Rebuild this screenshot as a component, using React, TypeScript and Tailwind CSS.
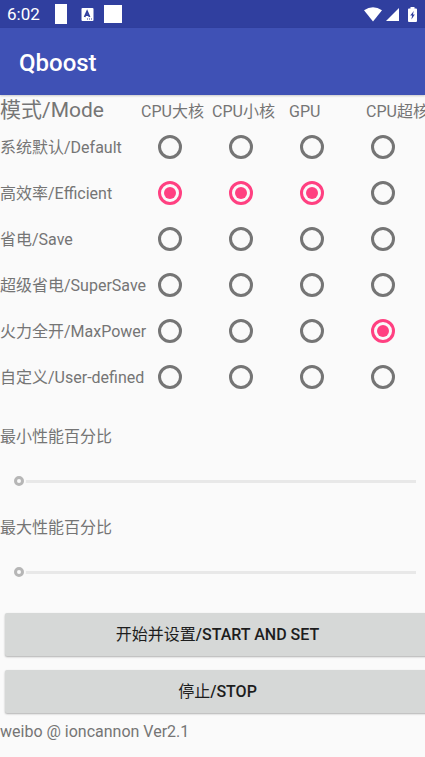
import { useState } from 'react';

const columns = [
  { id: 'big', label: 'CPU大核', pad: 'pl-0' },
  { id: 'little', label: 'CPU小核', pad: 'pl-0' },
  { id: 'gpu', label: 'GPU', pad: 'pl-[6px]' },
  { id: 'prime', label: 'CPU超核', pad: 'pl-3' },
];

const modes = [
  '系统默认/Default',
  '高效率/Efficient',
  '省电/Save',
  '超级省电/SuperSave',
  '火力全开/MaxPower',
  '自定义/User-defined',
];

function StatusBar() {
  return (
    <div className="flex h-7 items-center bg-[#303f9f] pl-[7px] pr-2 text-white">
      <span className="w-12 text-[17px] leading-7">6:02</span>
      <span className="h-5 w-3 bg-white" />
      <svg className="ml-[14px]" width="13" height="13" viewBox="0 0 13 13" aria-hidden="true">
        <rect x="0.5" width="12" height="13" rx="1" fill="#fff" />
        <path d="M3.6 9 6.1 3.4 8.6 9M4.6 7.2H7.6" fill="none" stroke="#303f9f" strokeWidth="1.8" />
        <path d="M6 11h1M8 11h1M10 11h1" stroke="#303f9f" />
      </svg>
      <span className="ml-[10px] size-[18px] bg-white" />
      <div className="ml-auto flex items-center">
        <svg width="18" height="15" viewBox="0 0 18 15" fill="#fff" aria-hidden="true">
          <path d="M0 3.2Q9-2.6 18 3.2L9 14.5Z" />
        </svg>
        <svg className="ml-1" width="13" height="13" viewBox="0 0 13 13" fill="#fff" aria-hidden="true">
          <path d="M13 0V13H0Z" />
        </svg>
        <svg className="ml-[9px]" width="9" height="15" viewBox="0 0 9 15" aria-hidden="true">
          <path d="M0 2.5Q0 1.5 1 1.5H2.5V0H6.5V1.5H8Q9 1.5 9 2.5V14Q9 15 8 15H1Q0 15 0 14Z" fill="#fff" />
          <path d="M5.8 4 2.2 8.6H4.1L3.4 12.5 6.8 7.6H4.9Z" fill="#303f9f" />
        </svg>
      </div>
    </div>
  );
}

function Percent({ id, label }: { id: string; label: string }) {
  const [value, setValue] = useState(0);
  return (
    <div className="h-[91px]">
      <label htmlFor={id} className="block leading-6">
        {label}
      </label>
      <div className="flex h-16 items-center px-[14px]">
        <input
          id={id}
          type="range"
          value={value}
          onChange={(e) => setValue(Number(e.target.value))}
          className="h-[10px] w-full appearance-none bg-transparent [&::-webkit-slider-runnable-track]:h-[3px] [&::-webkit-slider-runnable-track]:bg-[#e8e8e8] [&::-webkit-slider-thumb]:-mt-1 [&::-webkit-slider-thumb]:size-[10px] [&::-webkit-slider-thumb]:appearance-none [&::-webkit-slider-thumb]:rounded-full [&::-webkit-slider-thumb]:border-[3px] [&::-webkit-slider-thumb]:border-[#b6b6b6] [&::-webkit-slider-thumb]:bg-[#fafafa] [&::-webkit-slider-thumb]:shadow-[0_0_0_2px_#fafafa]"
        />
      </div>
    </div>
  );
}

const buttonClass =
  'h-[43px] w-full rounded-[2px] bg-[#d6d8d7] text-[16px] font-medium text-[#1d1d1d] shadow-[0_1px_2px_rgba(0,0,0,0.3)]';

export default function App() {
  const [picked, setPicked] = useState<Record<string, number>>({ big: 1, little: 1, gpu: 1, prime: 4 });
  return (
    <div className="min-h-screen overflow-hidden bg-[#fafafa] font-[Roboto,'Noto_Sans_CJK_SC',sans-serif] text-[16px] text-[#757575]">
      <StatusBar />
      <header className="flex h-[67px] items-center bg-[#3f51b5] pl-[19px] pt-[3px] shadow-[0_1px_2px_rgba(0,0,0,0.2)]">
        <h1 className="text-[24px] font-medium text-white">Qboost</h1>
      </header>
      <main className="w-[calc(100%+5px)]">
        <table className="w-full table-fixed border-collapse">
          <colgroup>
            <col className="w-[141px]" />
            <col className="w-[71px]" />
            <col className="w-[71px]" />
            <col className="w-[71px]" />
            <col />
          </colgroup>
          <thead>
            <tr className="whitespace-nowrap text-left align-baseline">
              <th scope="col" className="px-0 pb-px pt-1 text-[21px] font-normal leading-[22px]">
                模式/Mode
              </th>
              {columns.map((c) => (
                <th key={c.id} scope="col" className={`pt-1 pb-px pr-0 font-normal leading-[22px] ${c.pad}`}>
                  {c.label}
                </th>
              ))}
            </tr>
          </thead>
          <tbody>
            {modes.map((mode, row) => (
              <tr key={mode} className="h-[46px] whitespace-nowrap text-left">
                <th scope="row" className="px-0 pb-0 pt-0.5 font-normal">
                  {mode}
                </th>
                {columns.map((c) => (
                  <td key={c.id} className="py-0 pl-[17px] pr-0">
                    <input
                      type="radio"
                      name={c.id}
                      aria-label={`${c.label} ${mode}`}
                      checked={picked[c.id] === row}
                      onChange={() => setPicked({ ...picked, [c.id]: row })}
                      className="grid size-6 appearance-none place-content-center rounded-full border-[3px] border-[#757575] before:size-3 before:rounded-full checked:border-[#ff4081] checked:before:bg-[#ff4081]"
                    />
                  </td>
                ))}
              </tr>
            ))}
          </tbody>
        </table>
        <div className="pt-[25px]">
          <Percent id="min-percent" label="最小性能百分比" />
          <Percent id="max-percent" label="最大性能百分比" />
        </div>
        <div className="flex flex-col gap-[14px] pl-[5px] pt-1.5">
          <button type="button" className={buttonClass}>
            <span className="font-normal">开始并设置</span>/START AND SET
          </button>
          <button type="button" className={buttonClass}>
            <span className="font-normal">停止</span>/STOP
          </button>
        </div>
        <p className="pt-[7px] leading-6">weibo @ ioncannon Ver2.1</p>
      </main>
    </div>
  );
}
